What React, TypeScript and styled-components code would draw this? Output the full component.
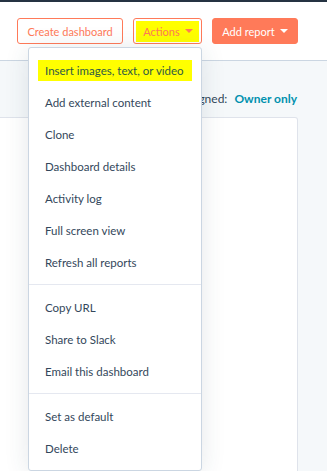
import React from "react";
import styled, { createGlobalStyle } from "styled-components";

const GlobalStyle = createGlobalStyle`
  html, body {
    margin: 0;
    padding: 0;
    overflow: hidden;
    background: #f5f8fa;
  }
  body {
    font-family: Lato, "Open Sans", sans-serif;
    color: #33475b;
  }
`;

const TopBar = styled.div`
  height: 2px;
  background-color: #253342;
`;

const Header = styled.header`
  position: relative;
  height: 59px;
  background-color: #fff;
  border-bottom: 1px solid #cbd6e2;
  display: flex;
  align-items: flex-start;
  justify-content: flex-end;
  padding: 16px 29px 0 0;
  box-sizing: border-box;
  gap: 10px;
`;

const Button = styled.button<{ primary?: boolean; width: number }>`
  width: ${(props) => props.width}px;
  height: 26px;
  flex-shrink: 0;
  box-sizing: border-box;
  border: 1px solid #ff7a59;
  border-radius: 3px;
  background-color: ${(props) => (props.primary ? "#ff7a59" : "#fff")};
  color: ${(props) => (props.primary ? "#fff" : "#ff7a59")};
  font-family: Lato, "Open Sans", sans-serif;
  font-size: 11px;
  white-space: nowrap;
  display: flex;
  align-items: center;
  justify-content: center;
  gap: 5px;
  padding: 0;
  cursor: pointer;
`;

const Caret = styled.span<{ light?: boolean }>`
  width: 0;
  height: 0;
  border-left: 4px solid transparent;
  border-right: 4px solid transparent;
  border-top: 4px solid ${(props) => (props.light ? "#fff" : "#ff7a59")};
`;

const Marker = styled.span`
  background-color: #ffff00;
  display: inline-flex;
  align-items: center;
  gap: 5px;
`;

const ActionsMarker = styled(Marker)`
  padding: 4px 6px 4px 7px;
`;

const Anchor = styled.div`
  position: relative;
  flex-shrink: 0;
`;

const Dropdown = styled.div`
  position: absolute;
  top: 29px;
  right: 0;
  width: 174px;
  box-sizing: border-box;
  background-color: #fff;
  border: 1px solid #cbd6e2;
  border-radius: 3px;
  box-shadow: 0 2px 24px rgba(45, 62, 80, 0.12);
  z-index: 10;
`;

const Group = styled.div`
  padding: 6px 0;
  & + & {
    border-top: 1px solid #e5e8f0;
  }
`;

const Item = styled.div`
  height: 32px;
  display: flex;
  align-items: center;
  padding-left: 16px;
  font-size: 11.5px;
  color: #33475b;
  white-space: nowrap;
`;

const ItemMarker = styled(Marker)`
  padding: 4px 8px 4px 7px;
  margin-left: -7px;
  color: #2e5a46;
`;

const Body = styled.div`
  padding-top: 30px;
`;

const AssignedRow = styled.div`
  display: flex;
  justify-content: flex-end;
  padding-right: 30px;
  font-size: 12px;
  height: 26px;
  gap: 7px;
`;

const Owner = styled.span`
  color: #0091ae;
  font-weight: 700;
`;

const Card = styled.div`
  height: 400px;
  margin-right: 29px;
  background-color: #fff;
  border: 1px solid #dfe3eb;
  border-left: none;
  border-radius: 0 3px 0 0;
`;

const groups = [
  [
    "Insert images, text, or video",
    "Add external content",
    "Clone",
    "Dashboard details",
    "Activity log",
    "Full screen view",
    "Refresh all reports",
  ],
  ["Copy URL", "Share to Slack", "Email this dashboard"],
  ["Set as default", "Delete"],
];

const App = () => {
  return (
    <>
      <GlobalStyle />
      <TopBar />
      <Header>
        <Button width={106}>Create dashboard</Button>
        <Anchor>
          <Button width={69}>
            <ActionsMarker>
              Actions <Caret />
            </ActionsMarker>
          </Button>
          <Dropdown>
            {groups.map((group, i) => (
              <Group key={i}>
                {group.map((label, j) => (
                  <Item key={label}>
                    {i === 0 && j === 0 ? (
                      <ItemMarker>{label}</ItemMarker>
                    ) : (
                      label
                    )}
                  </Item>
                ))}
              </Group>
            ))}
          </Dropdown>
        </Anchor>
        <Button primary width={86}>
          Add report <Caret light />
        </Button>
      </Header>
      <Body>
        <AssignedRow>
          <span>Assigned:</span>
          <Owner>Owner only</Owner>
        </AssignedRow>
        <Card />
      </Body>
    </>
  );
};

export default App;
